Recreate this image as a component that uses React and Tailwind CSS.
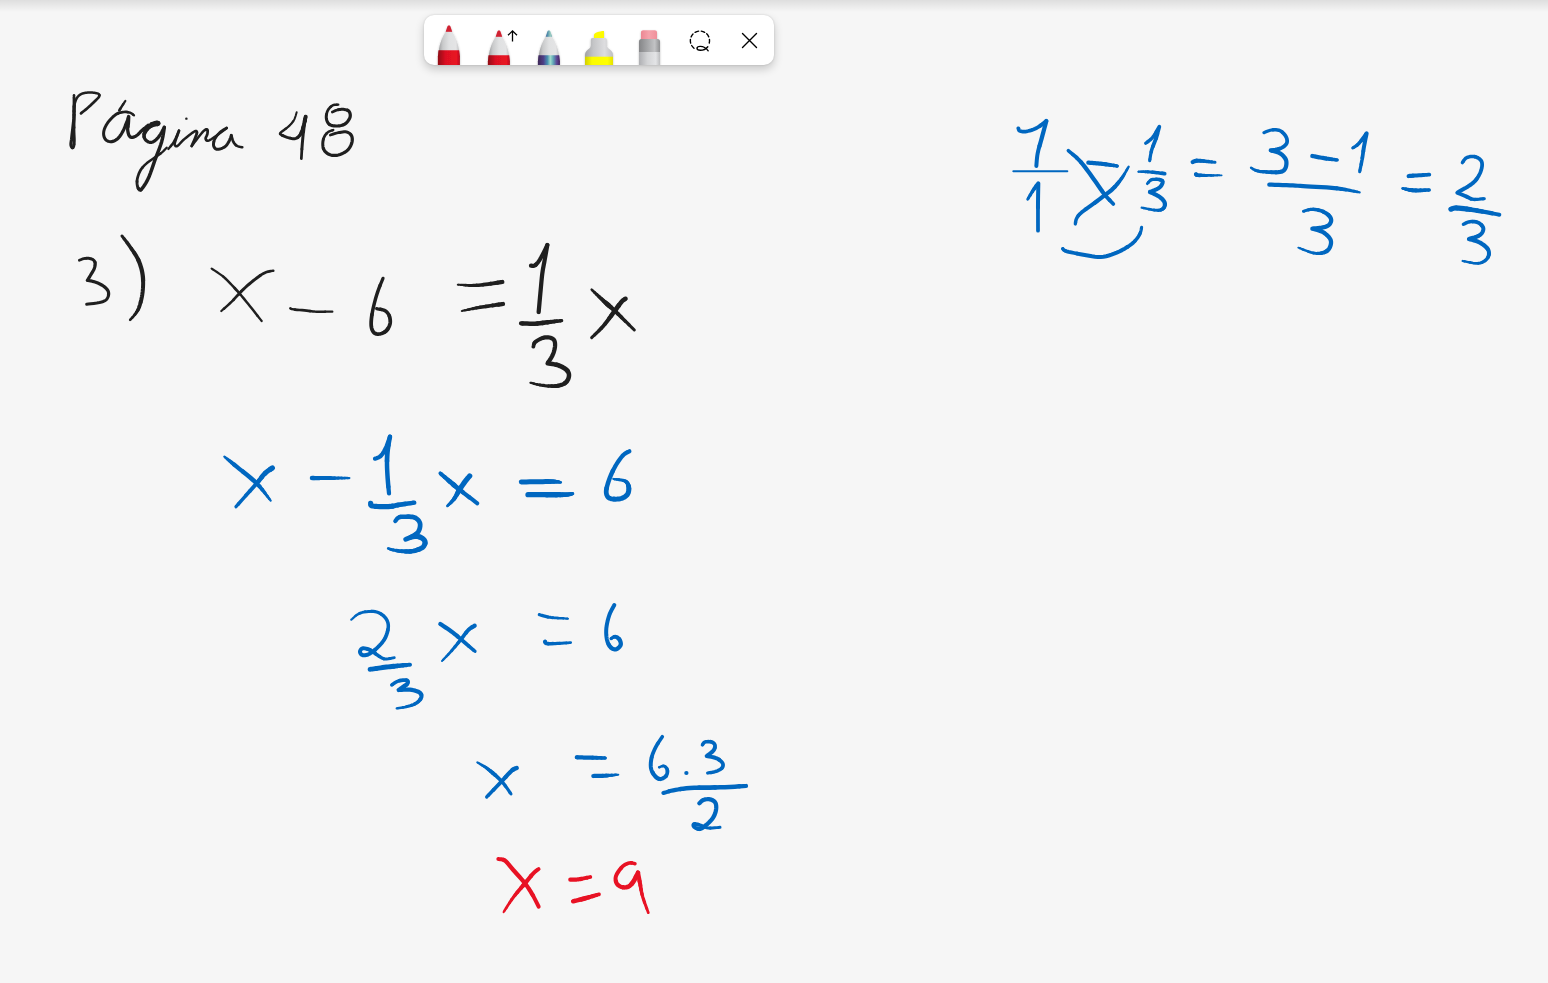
import React from 'react';

const BLACK = '#1f1f1f';
const BLUE = '#0067c0';
const RED = '#e81224';

// Pen strokes, grouped by where they were written. `at` is the group's origin on
// the board; points are stored at three units per pixel. `w` is the pen pressure
// (line width in pixels) along the stroke. A doubled point is a sharp corner.
const INK = [
  {
    label: 'Página 48',
    color: BLACK,
    at: [50, 80],
    strokes: [
      { w: [2.2, 3, 3, 2.4, 3], p: '72,46 72,75 72,110 69,140 65,175 63,195 69,203 73,185 72,150 72,100 73,75' },
      { w: [2.2, 2.4], p: '73,75 80,55 92,43 110,38 130,38 146,42 147,50 135,63 115,82 93,100' },
      { w: [1.8, 2.4], p: '226,63 218,75 208,91' },
      { w: [2, 2.8, 2.8, 3.2, 3, 2.8], p: '252,106 240,98 222,96 200,102 178,122 164,145 161,165 168,180 184,185 203,176 218,155 230,128 236,110 236,110 235,130 233,150 238,168 248,172 262,165 275,152 295,135' },
      { w: [3.2, 4.6, 3, 3, 3.2, 3.2, 2.6, 2.2, 2], p: '304,132 320,128 324,131 306,135 292,146 282,165 288,181 305,187 325,172 343,142 343,142 335,185 315,240 295,295 275,327 267,328 262,316 262,296 272,270 290,250 315,232 335,218 350,203' },
      { w: [2, 2.4, 2.2, 2.2, 2.4], p: '355,207 372,185 387,152 387,152 378,178 374,194 382,198 400,180 425,160 438,153 440,162 425,198' },
      { w: [2.2, 2.4, 2.2], p: '425,198 445,172 462,152 472,149 472,162 467,176 475,182 498,168 530,144' },
      { w: [2.4, 2.8, 2.2], p: '530,144 510,157 494,178 491,198 502,208 525,200 538,182 544,166 544,166 550,185 560,197 577,202' },
      { w: [2.4], p: '409,116' },
      { w: [1.6, 2, 2.6, 2.8, 3.6, 3, 2.4], p: '740,97 732,120 715,140 692,158 695,165 715,173 735,176 750,165 760,140 767,110 767,110 762,140 757,190 754,236' },
      { w: [2, 2.8, 3, 2.4], p: '865,74 848,76 833,92 829,115 838,133 860,138 885,132 900,112 897,94 880,88 862,90 847,96' },
      { w: [2, 3, 3, 2.4], p: '850,150 832,158 820,178 820,205 835,222 860,226 890,213 905,190 905,168 890,156 865,158 841,165' },
    ],
  },
  {
    label: '3) x − 6',
    color: BLACK,
    at: [60, 220],
    strokes: [
      { w: [2.4, 3, 3, 2.6], p: '58,121 75,115 95,117 105,127 103,145 92,165 82,181 82,181 105,186 130,198 145,215 142,235 125,246 80,253' },
      { w: [2.6, 4, 3.6, 2], p: '186,48 210,80 235,120 248,165 248,215 238,260 225,283 210,300' },
      { w: [1.8, 2.4, 2], p: '455,146 490,170 520,200 545,228 575,265 605,303' },
      { w: [2.2, 2.8, 2], p: '640,152 615,158 585,178 550,208 515,245 484,273' },
      { w: [2.2, 2.4, 2], p: '691,265 700,268 740,272 770,275 817,275' },
      { w: [3, 3.4, 3.6, 3], p: '969,175 955,210 943,250 935,290 934,320 942,338 958,342 978,333 990,312 988,288 975,272 950,266' },
    ],
  },
  {
    label: '= 1/3 x',
    color: BLACK,
    at: [440, 230],
    strokes: [
      { w: [1.4, 3, 4], p: '53,164 110,166 187,156' },
      { w: [1.4, 3, 4], p: '65,243 120,232 189,222' },
      { w: [4, 3.6, 4, 4], p: '273,107 285,106 300,88 322,45 322,45 314,90 307,130 302,180 296,246' },
      { w: [4, 4.4, 3], p: '243,280 285,281 330,276 365,272' },
      { w: [3.4, 4, 4, 4.4, 4, 1.8], p: '280,350 285,337 305,325 325,322 342,330 345,350 338,375 323,400 323,400 355,406 380,420 387,437 378,457 355,467 325,468 295,464 271,458' },
      { w: [1.8, 4.4, 2.6], p: '455,179 490,212 525,243 583,300' },
      { w: [4, 4.4, 2.6], p: '557,206 545,215 524,243 490,288 455,323' },
    ],
  },
  {
    label: 'x − 1/3',
    color: BLUE,
    at: [210, 420],
    strokes: [
      { w: [1.4, 4, 4.2, 2], p: '43,110 80,140 140,190 182,242' },
      { w: [5, 4.4, 3], p: '187,144 165,160 140,190 78,260' },
      { w: [4.2, 3.6, 2], p: '306,174 418,174' },
      { w: [4, 4, 4.4, 4], p: '495,116 512,108 527,85 540,50 540,50 533,90 531,130 533,175 537,220' },
      { w: [5, 5, 4], p: '482,250 488,258 535,260 570,254 613,248' },
      { w: [3.8, 4.4, 4.4, 4.4, 5, 4.4, 2], p: '556,303 567,292 590,290 615,293 630,310 625,335 605,350 587,358 587,358 610,350 632,352 645,365 638,382 610,393 580,394 550,390 534,385' },
    ],
  },
  {
    label: 'x = 6',
    color: BLUE,
    at: [430, 430],
    strokes: [
      { w: [3.4, 4.6, 3.6], p: '31,130 60,155 90,180 142,220' },
      { w: [5, 5, 2.2], p: '119,138 105,155 88,180 72,207 52,228' },
      { w: [4.8, 4.8, 2], p: '274,156 330,155 375,155 393,157' },
      { w: [4.8, 5.2, 3], p: '294,194 350,194 405,194 428,191' },
      { w: [4, 4, 4.4, 4.6, 4.6, 2], p: '598,64 580,75 558,105 540,142 529,180 533,200 548,207 575,205 593,192 596,170 585,153 550,147' },
    ],
  },
  {
    label: '2/3 x = 6',
    color: BLUE,
    at: [330, 590],
    strokes: [
      { w: [1.8, 3, 3.4, 3.8, 3.6, 2.4], p: '64,89 85,72 110,65 140,66 165,82 175,108 165,145 140,175 115,193 97,195 90,185 98,175 120,180 145,197 165,207 193,203' },
      { w: [4.4, 4.8, 3.6], p: '120,238 180,230 240,224' },
      { w: [3, 3.8, 4, 3.8, 2], p: '185,285 205,273 230,271 233,280 220,290 206,300 206,300 240,299 268,307 274,322 258,340 230,350 200,355' },
      { w: [4, 4, 3], p: '331,102 365,125 393,148 435,184' },
      { w: [4, 3.4, 1.8], p: '434,107 415,120 393,148 365,182 336,213' },
      { w: [3, 2.8, 1.8], p: '628,74 660,82 714,86' },
      { w: [3.6, 3.4, 2.4], p: '645,155 655,161 722,158' },
      { w: [3.6, 3.6, 4, 4, 2.8], p: '853,45 838,75 829,115 831,150 842,172 858,178 872,165 868,148 855,140 843,146' },
    ],
  },
  {
    label: 'x = 6 · 3 / 2',
    color: BLUE,
    at: [460, 720],
    strokes: [
      { w: [1.4, 3.6, 2.8], p: '52,127 85,148 125,184 153,222' },
      { w: [4.2, 4, 3], p: '170,144 155,152 125,184 80,231' },
      { w: [3.8, 4, 3], p: '350,112 390,113 436,114' },
      { w: [4, 3.8, 1.6], p: '400,168 435,167 475,164' },
      { w: [3.2, 3.6, 4, 3.4, 2], p: '607,50 588,80 575,112 573,145 585,168 600,177 618,168 622,150 612,138 597,142' },
      { w: [4.2], p: '679,159' },
      { w: [3, 3.6, 3.6, 3], p: '727,75 735,66 755,66 765,76 760,92 740,108 740,108 770,115 788,130 785,145 765,155 743,159' },
      { w: [3.6, 4, 4.4, 4], p: '610,219 640,211 690,204 780,202 858,198' },
      { w: [4, 4, 4, 3.6, 2.6], p: '718,250 730,240 750,238 766,248 768,270 758,295 735,318 718,327 702,320 703,312 722,316 745,324 780,322' },
    ],
  },
  {
    label: 'x = 9',
    color: RED,
    at: [460, 720],
    strokes: [
      { w: [3.6, 4, 4, 3.6], p: '115,417 135,422 160,450 195,490 218,525 236,560' },
      { w: [3.4, 4, 2], p: '236,447 220,460 195,490 160,532 131,576' },
      { w: [4, 4, 3.4], p: '331,479 355,478 391,471' },
      { w: [4, 4.4, 3.4], p: '339,544 375,535 417,523' },
      { w: [3.2, 3.6, 4, 4.4, 4, 2.4], p: '525,431 508,429 487,440 468,468 470,490 485,501 505,500 520,485 534,458 534,458 540,490 548,530 565,578' },
    ],
  },
  {
    label: '1/1 − 1/3 =',
    color: BLUE,
    at: [1000, 110],
    strokes: [
      { w: [3.4, 3.4, 4, 3.6], p: '55,55 60,63 80,64 110,54 139,33 139,33 125,85 113,130 109,168' },
      { w: [1.8, 1.8], p: '40,184 202,184' },
      { w: [2.4, 3.6, 3.8, 3.4], p: '83,268 100,240 115,220 115,220 114,280 114,362' },
      { w: [3, 4, 4, 3.4], p: '205,122 235,148 260,178 290,220 315,255 340,282' },
      { w: [1.8, 3.8, 4, 3.4, 3], p: '386,170 365,205 340,235 315,255 285,278 245,307 230,325 226,342' },
      { w: [4, 4, 3], p: '265,158 310,162 352,168' },
      { w: [3, 3.4, 3.6, 2.8], p: '437,100 458,82 478,50 478,50 468,85 455,120 449,152' },
      { w: [1.6, 3, 3.4], p: '415,185 450,186 494,191' },
      { w: [2.4, 3.6, 3.8, 4, 2], p: '442,221 455,209 480,209 488,217 478,233 450,246 450,246 478,260 494,278 490,295 470,301 425,293' },
      { w: [4, 3.8, 2.6], p: '578,156 595,152 645,157' },
      { w: [4, 3.4, 1.4], p: '588,193 600,196 665,196' },
      { w: [3, 3.8, 3.6, 2.8], p: '188,416 200,424 250,434 302,441 350,428 395,402 418,375 425,352' },
    ],
  },
  {
    label: '(3 − 1)/3 = 2/3',
    color: BLUE,
    at: [1240, 120],
    strokes: [
      { w: [2.8, 3.4, 3.6, 4, 4, 2], p: '72,38 95,30 120,32 138,50 140,70 122,85 92,91 92,91 120,100 138,120 136,145 120,156 80,156 50,152 33,143' },
      { w: [4, 4, 2.8], p: '217,108 255,115 292,120' },
      { w: [2.6, 3.6, 3.8, 2.8], p: '338,84 355,72 380,40 380,40 372,80 366,120 359,155' },
      { w: [4, 4, 4, 4, 2], p: '88,194 150,196 200,199 290,205 359,217' },
      { w: [2.4, 3.8, 4, 4, 4, 1.8], p: '190,274 215,268 245,273 268,288 273,305 258,320 217,326 217,326 250,337 272,360 268,385 250,398 220,399 175,383' },
      { w: [4, 3.4], p: '506,168 568,164' },
      { w: [1.8, 4, 3], p: '487,205 520,211 568,210' },
      { w: [3, 3.4, 3.6, 3.8, 2.8], p: '667,128 680,113 705,110 725,125 722,155 700,188 652,218 652,218 680,230 700,238 733,236' },
      { w: [4.4, 5, 3.6], p: '632,268 650,264 700,270 778,284' },
      { w: [3, 3.6, 4, 3.8, 2], p: '670,313 690,305 715,308 730,325 720,345 687,357 687,357 720,368 745,390 742,415 715,430 668,423' },
    ],
  },
];

// Every nib adds a little width to the recorded pressure.
const NIB = 0.3;

const spline = (a, b, c, d, t) =>
  0.5 * (2 * b + (c - a) * t + (2 * a - 5 * b + 4 * c - d) * t * t + (3 * b - a - 3 * c + d) * t * t * t);

const pressureAt = (w, f) => {
  const pos = f * (w.length - 1);
  const i = Math.min(Math.floor(pos), w.length - 1);
  const next = w[Math.min(i + 1, w.length - 1)];
  return w[i] + (next - w[i]) * (pos - i) + NIB;
};

// Smooths a stroke and splits it into runs of equal line width.
function toRuns({ w, p }, [ox, oy]) {
  const pts = p.split(' ').map((s) => {
    const [x, y] = s.split(',').map(Number);
    return [ox + x / 3, oy + y / 3];
  });
  if (pts.length === 1) {
    const [x, y] = pts[0];
    return [{ width: w[0], points: [[x, y], [x + 0.1, y]] }];
  }
  const steps = pts.length < 4 ? 12 : 6;
  const spans = pts.length - 1;
  const runs = [];
  let prev = pts[0];
  for (let i = 0; i < spans; i++) {
    const a = pts[Math.max(i - 1, 0)];
    const b = pts[i];
    const c = pts[i + 1];
    const d = pts[Math.min(i + 2, spans)];
    if (b[0] === c[0] && b[1] === c[1]) continue;
    for (let s = 1; s <= steps; s++) {
      const t = s / steps;
      const next = [spline(a[0], b[0], c[0], d[0], t), spline(a[1], b[1], c[1], d[1], t)];
      const width = Math.round(pressureAt(w, (i + t) / spans) * 4) / 4;
      const last = runs[runs.length - 1];
      if (last && last.width === width) last.points.push(next);
      else runs.push({ width, points: [prev, next] });
      prev = next;
    }
  }
  return runs;
}

function Stroke({ stroke, at }) {
  return toRuns(stroke, at).map((run, i) => (
    <polyline
      key={i}
      strokeWidth={run.width}
      points={run.points.map(([x, y]) => x.toFixed(2) + ',' + y.toFixed(2)).join(' ')}
    />
  ));
}

function Ink() {
  return (
    <svg className="block h-screen w-full" fill="none" strokeLinecap="round" strokeLinejoin="round">
      {INK.map((group) => (
        <g key={group.label} role="img" aria-label={group.label} stroke={group.color}>
          {group.strokes.map((stroke, i) => (
            <Stroke key={i} stroke={stroke} at={group.at} />
          ))}
        </g>
      ))}
    </svg>
  );
}

function Tool({ label, children }) {
  return (
    <button type="button" aria-label={label} className="size-[50px] shrink-0 cursor-pointer">
      <svg viewBox="0 0 50 50" className="block size-full" fill="none" aria-hidden="true">
        {children}
      </svg>
    </button>
  );
}

function Pen({ id, drop, fill }) {
  return (
    <g transform={'translate(0 ' + drop + ')'} filter="url(#tool-shadow)">
      <defs>
        <linearGradient id={id + '-shell'} x1="14" x2="36" y1="0" y2="0" gradientUnits="userSpaceOnUse">
          <stop offset="0" stopColor="#98999b" />
          <stop offset="0.22" stopColor="#c9cacb" />
          <stop offset="0.5" stopColor="#e0e1e2" />
          <stop offset="0.82" stopColor="#e4e4e5" />
          <stop offset="1" stopColor="#b5b6b8" />
        </linearGradient>
        <linearGradient id={id + '-shade'} x1="14" x2="36" y1="0" y2="0" gradientUnits="userSpaceOnUse">
          <stop offset="0" stopColor="#000" stopOpacity="0.38" />
          <stop offset="0.35" stopColor="#000" stopOpacity="0.05" />
          <stop offset="0.85" stopColor="#000" stopOpacity="0" />
          <stop offset="1" stopColor="#000" stopOpacity="0.22" />
        </linearGradient>
      </defs>
      <path d="M21.8 16.5h6.2c3.6 5.5 6.2 12 7 18.8l.8 6v12H14v-12l.8-6c.8-6.8 3.4-13.3 7-18.8z" fill={'url(#' + id + '-shell)'} />
      <path d="M14.6 35.3h20.6l.7 6v12H13.900v-12z" fill={fill} />
      <path d="M14.6 35.3h20.6l.7 6v12H13.900v-12z" fill={'url(#' + id + '-shade)'} />
      <path d="M21.7 16.8l1.600-4.800c.6-1.900 2.700-1.900 3.300 0l1.600 4.800z" fill={fill} />
      <path d="M21.7 16.8l1.600-4.800c.6-1.900 2.700-1.900 3.300 0l1.600 4.800z" fill="#667" fillOpacity="0.18" />
    </g>
  );
}

function Toolbar() {
  return (
    <div
      role="toolbar"
      className="absolute left-[424px] top-[15px] flex overflow-hidden rounded-[10px] bg-white shadow-[0_0_2px_rgba(0,0,0,0.16),0_4px_10px_rgba(0,0,0,0.2)]"
    >
      <svg className="absolute size-0" aria-hidden="true">
        <defs>
          <filter id="tool-shadow" x="-30%" y="-30%" width="160%" height="160%">
            <feDropShadow dx="0" dy="1" stdDeviation="1.2" floodColor="#000" floodOpacity="0.25" />
          </filter>
          <linearGradient id="galaxy" x1="14" x2="36" y1="0" y2="0" gradientUnits="userSpaceOnUse">
            <stop offset="0" stopColor="#63408e" />
            <stop offset="0.25" stopColor="#5a4a9e" />
            <stop offset="0.42" stopColor="#4590b4" />
            <stop offset="0.56" stopColor="#a4e2d2" />
            <stop offset="0.7" stopColor="#5fa3b8" />
            <stop offset="0.84" stopColor="#5c4c98" />
            <stop offset="1" stopColor="#582a7a" />
          </linearGradient>
          <linearGradient id="marker" x1="11" x2="39" y1="0" y2="0" gradientUnits="userSpaceOnUse">
            <stop offset="0" stopColor="#a2a3a5" />
            <stop offset="0.3" stopColor="#c4c5c7" />
            <stop offset="0.7" stopColor="#dddddf" />
            <stop offset="1" stopColor="#bfc0c2" />
          </linearGradient>
          <linearGradient id="marker-ink" x1="11" x2="39" y1="0" y2="0" gradientUnits="userSpaceOnUse">
            <stop offset="0" stopColor="#d2cf00" />
            <stop offset="0.25" stopColor="#fbfb00" />
            <stop offset="0.8" stopColor="#ffff00" />
            <stop offset="1" stopColor="#e4e200" />
          </linearGradient>
          <linearGradient id="ferrule" x1="15" x2="36" y1="0" y2="0" gradientUnits="userSpaceOnUse">
            <stop offset="0" stopColor="#858688" />
            <stop offset="0.4" stopColor="#a5a6a8" />
            <stop offset="0.75" stopColor="#c2c3c5" />
            <stop offset="1" stopColor="#8e8f91" />
          </linearGradient>
          <linearGradient id="sleeve" x1="15" x2="36" y1="0" y2="0" gradientUnits="userSpaceOnUse">
            <stop offset="0" stopColor="#aeafb2" />
            <stop offset="0.4" stopColor="#d3d4d6" />
            <stop offset="0.8" stopColor="#e3e4e6" />
            <stop offset="1" stopColor="#bdbec0" />
          </linearGradient>
          <linearGradient id="rubber" x1="17" x2="33" y1="0" y2="0" gradientUnits="userSpaceOnUse">
            <stop offset="0" stopColor="#ec8793" />
            <stop offset="0.5" stopColor="#f5a3ac" />
            <stop offset="1" stopColor="#f0909b" />
          </linearGradient>
        </defs>
      </svg>
      <Tool label="Red pen">
        <Pen id="pen-a" drop={0} fill="#e81224" />
      </Tool>
      <Tool label="Red arrow pen">
        <Pen id="pen-b" drop={5} fill="#e81224" />
        <path d="M38.5 26.5V16M34 20.300l4.500-4.500 4.500 4.500" stroke="#000" strokeWidth="1.3" />
      </Tool>
      <Tool label="Galaxy pen">
        <Pen id="pen-c" drop={5} fill="url(#galaxy)" />
      </Tool>
      <Tool label="Highlighter">
        <g filter="url(#tool-shadow)">
          <path d="M20 24v-4.500c0-1.200 5-3.500 10-3.500v8z" fill="#fdfb00" />
          <path d="M18.500 23h12.500c1.200 0 1.900.8 1.900 2v5c0 2 1 3 3 4.500s3.100 3 3.100 5.500v14H11V40c0-2.500 1-4 3-5.500s2.800-2.500 2.800-4.500v-5c0-1.200.6-2 1.700-2z" fill="url(#marker)" />
          <path d="M11 41.700h28V54H11z" fill="url(#marker-ink)" />
        </g>
      </Tool>
      <Tool label="Eraser">
        <g filter="url(#tool-shadow)">
          <path d="M17 25v-7.500c0-1.600.9-2.300 2.300-2.300h11.400c1.400 0 2.300.7 2.300 2.300V25z" fill="url(#rubber)" />
          <path d="M15 54V26.500c0-1.600.9-2.500 2.300-2.500h16.400c1.400 0 2.300.9 2.300 2.500V54z" fill="url(#ferrule)" />
          <path d="M15 37h21v17H15z" fill="url(#sleeve)" />
        </g>
      </Tool>
      <Tool label="Lasso select">
        <path d="M20 33.200a9.600 9.600 0 1 1 14.600-3.400" stroke="#000" strokeWidth="1.4" strokeLinecap="round" strokeDasharray="3.6 2.6" />
        <path d="M34.200 35.800c-2.200-3.100-5-4.400-8-4.400-2 0-3.200.8-3.200 1.900s1.200 2 3.400 2c3.100 0 5.400-1.200 7.400-3.600" stroke="#000" strokeWidth="1.4" strokeLinecap="round" />
      </Tool>
      <Tool label="Close">
        <path d="M18.500 18.500l14 14M32.500 18.500l-14 14" stroke="#000" strokeWidth="1.400" strokeLinecap="round" />
      </Tool>
    </div>
  );
}

export default function App() {
  return (
    <main className="relative min-h-screen w-full overflow-hidden bg-[#f6f6f6]">
      <div className="absolute inset-x-0 top-0 h-3 bg-linear-to-b from-[#dedede] to-[#f6f6f6]" />
      <Ink />
      <Toolbar />
    </main>
  );
}
